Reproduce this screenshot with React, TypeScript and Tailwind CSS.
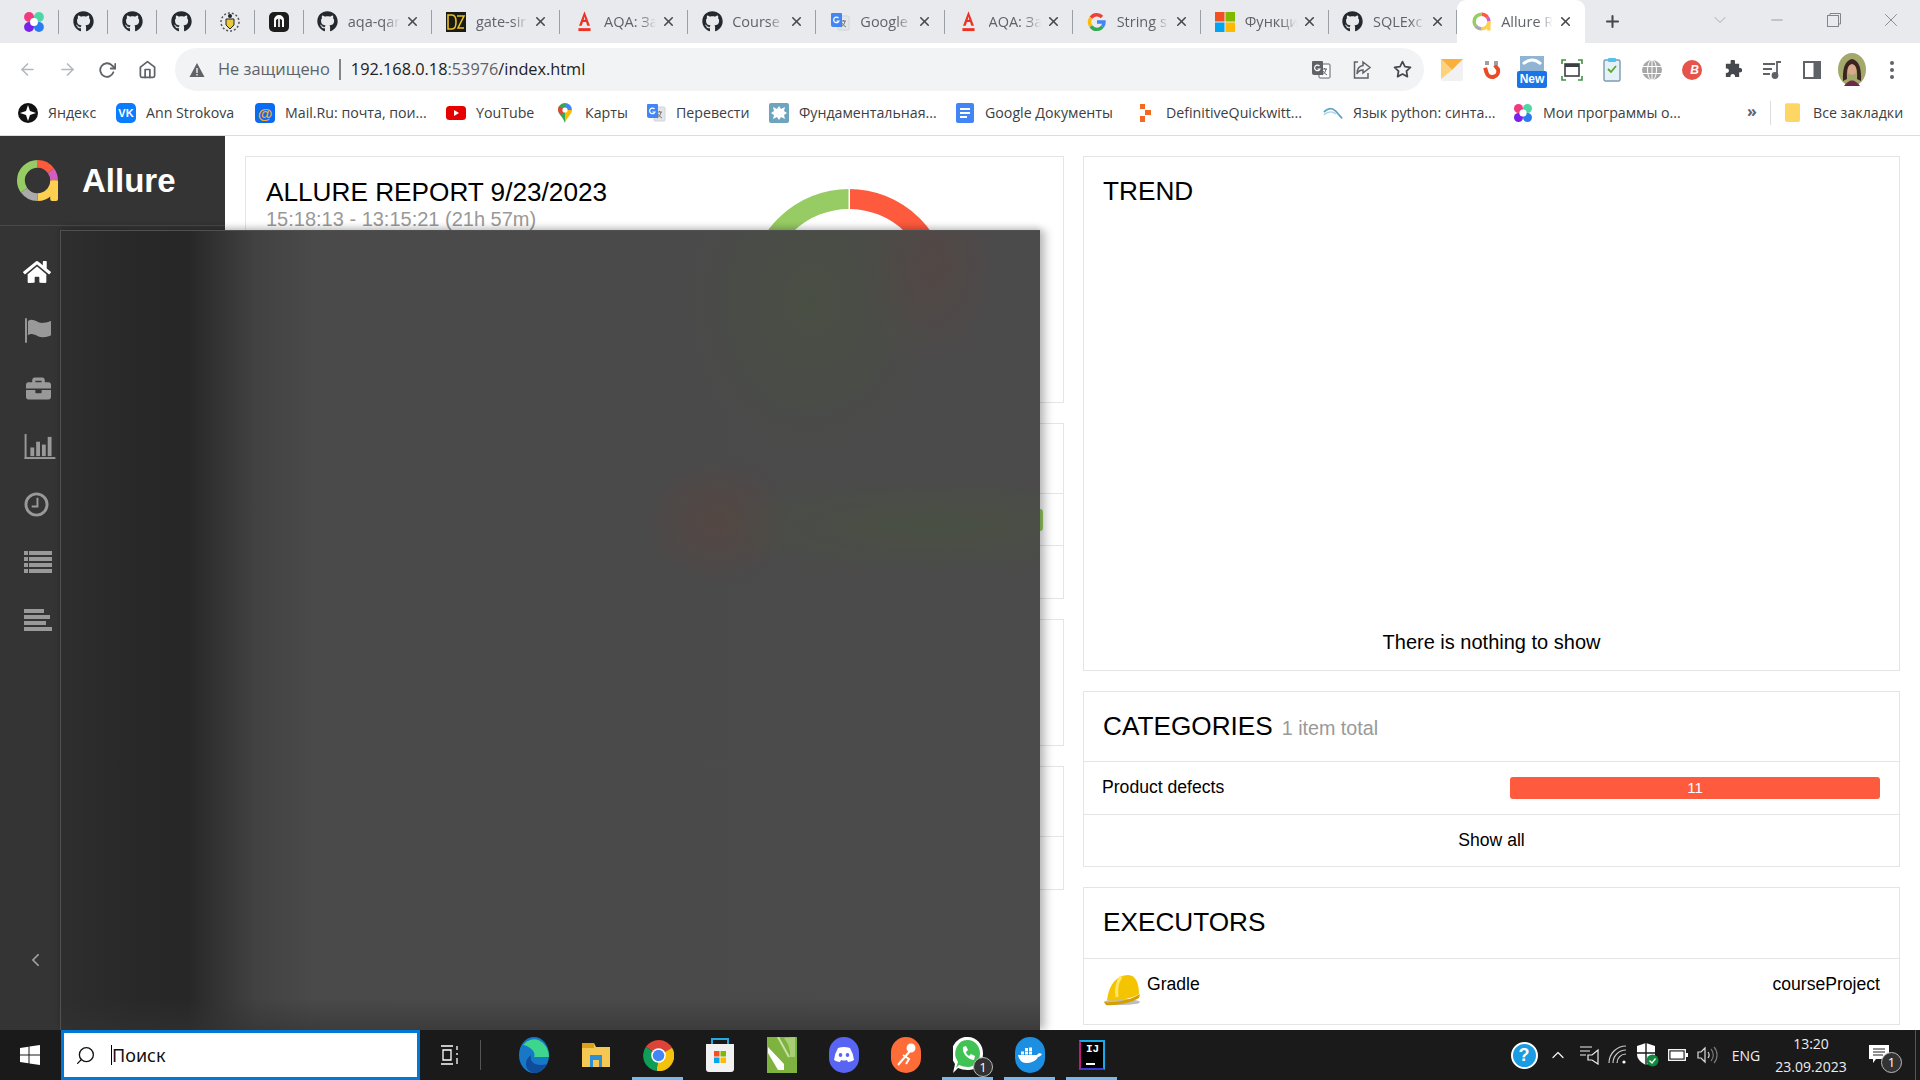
import React from 'react';
import { FaGithub, FaHome, FaBriefcase } from 'react-icons/fa';
import { FiArrowLeft, FiArrowRight, FiRotateCw, FiHome, FiStar, FiX, FiPlus, FiChevronDown, FiChevronLeft, FiChevronUp, FiMinus, FiSearch } from 'react-icons/fi';

const ui = "font-['Open_Sans','Noto_Sans',sans-serif]";

const Flower = () => (
  <svg viewBox="0 0 20 20" className="w-[22px] h-[22px]">
    <circle cx="5.5" cy="5.5" r="4.5" fill="#f0397f" />
    <circle cx="14.5" cy="5.5" r="4.5" fill="#4fd6a5" />
    <circle cx="5.5" cy="14.5" r="4.5" fill="#7a22e8" />
    <circle cx="14.5" cy="14.5" r="4.5" fill="#2a7cf0" />
    <circle cx="10" cy="10" r="3.6" fill="#fff" />
  </svg>
);

const AllureLogo = ({ className }: { className: string }) => (
  <svg viewBox="0 0 44 44" className={className}>
    <g fill="none" strokeWidth="8" transform="rotate(-90 22 22)">
      <circle cx="22" cy="22" r="17" pathLength={100} stroke="#fd5a3e" strokeDasharray="15 85" />
      <circle cx="22" cy="22" r="17" pathLength={100} stroke="#d35ebe" strokeDasharray="10 90" strokeDashoffset="-15" />
      <circle cx="22" cy="22" r="17" pathLength={100} stroke="#ffd050" strokeDasharray="25 75" strokeDashoffset="-25" />
      <circle cx="22" cy="22" r="17" pathLength={100} stroke="#aaaaaa" strokeDasharray="15 85" strokeDashoffset="-50" />
      <circle cx="22" cy="22" r="17" pathLength={100} stroke="#97cc64" strokeDasharray="35 65" strokeDashoffset="-65" />
    </g>
    <rect x="35" y="22" width="8" height="21" rx="2" fill="#ffd050" />
  </svg>
);

const AlfaIcon = () => (
  <svg viewBox="3 0 14 19" className="w-[17px] h-[23px]">
    <path d="M10 1 L14.5 13 H12.3 L11.3 10 H8.7 L7.7 13 H5.5 Z M9.3 8 H10.7 L10 5.6 Z" fill="#ef3124" fillRule="evenodd" />
    <rect x="5" y="15" width="10" height="2.4" fill="#ef3124" />
  </svg>
);

const TranslateIcon = ({ dark }: { dark?: boolean }) => (
  <svg viewBox="0 0 20 20" className="w-5 h-5">
    <rect x="8" y="4" width="11" height="14" rx="1" fill={dark ? '#fff' : '#e3e5e8'} stroke={dark ? '#5f6368' : '#d0d3d8'} strokeWidth="1" />
    <path d="M11 9 L16 9 M13.5 8 V9 M15 9 C14.5 12 13 14 11 15 M12 11 C13 13 14.5 14 16 15" stroke={dark ? '#5f6368' : '#70757a'} fill="none" strokeWidth="1" />
    <path d="M2 1 H11 A1 1 0 0 1 12 2 V15 H3 A2 2 0 0 1 1 13 V2 A1 1 0 0 1 2 1 Z" fill={dark ? '#5f6368' : '#4285f4'} />
    <path d="M8.5 6 A2.8 2.8 0 1 0 9 9 H6.5" stroke="#fff" strokeWidth="1.2" fill="none" />
  </svg>
);

const GoogleIcon = () => (
  <svg viewBox="0 0 20 20" className="w-5 h-5">
    <g fill="none" strokeWidth="3.4">
      <path d="M15 5 A7 7 0 0 0 4 5.8" stroke="#ea4335" />
      <path d="M4 5.8 A7 7 0 0 0 4 14.2" stroke="#fbbc05" />
      <path d="M4 14.2 A7 7 0 0 0 15.5 14.5" stroke="#34a853" />
      <path d="M15.5 14.5 A7 7 0 0 0 17 10 H10" stroke="#4285f4" />
    </g>
  </svg>
);

const MsIcon = () => (
  <svg viewBox="0 0 20 20" className="w-5 h-5">
    <rect x="0" y="0" width="9.5" height="9.5" fill="#f25022" />
    <rect x="10.5" y="0" width="9.5" height="9.5" fill="#7fba00" />
    <rect x="0" y="10.5" width="9.5" height="9.5" fill="#00a4ef" />
    <rect x="10.5" y="10.5" width="9.5" height="9.5" fill="#ffb900" />
  </svg>
);

const GitIcon = () => <FaGithub className="w-[21px] h-[21px] text-[#24292f]" />;

const SmallTab = ({ children }: { children: React.ReactNode }) => (
  <div className="w-[49px] h-full flex items-center justify-center border-r-0 relative">
    {children}
    <span className="absolute right-0 top-[10px] h-[24px] w-px bg-[#9aa0a6]" />
  </div>
);

const TextTab = ({ icon, title, active }: { icon: React.ReactNode; title: string; active?: boolean }) => (
  <div className={active ? 'w-[128.3px] h-[43px] flex items-center relative bg-white rounded-t-[9px]' : 'w-[128.3px] h-[43px] flex items-center relative'}>
    <div className="w-[22px] ml-[13px] flex justify-center">{icon}</div>
    <div className="w-[52px] ml-[9px] overflow-hidden whitespace-nowrap text-[14.5px] text-[#5f6368] [mask-image:linear-gradient(to_right,#000_70%,transparent)]">{title}</div>
    <FiX className="w-[15px] h-[15px] text-[#45494d] ml-[5px]" strokeWidth={2.5} />
    {!active && <span className="absolute right-0 top-[10px] h-[24px] w-px bg-[#9aa0a6]" />}
  </div>
);

const TabStrip = () => (
  <div className={`h-[43px] bg-[#e8eaed] flex pl-[10px] ${ui}`}>
    <SmallTab><Flower /></SmallTab>
    <SmallTab><GitIcon /></SmallTab>
    <SmallTab><GitIcon /></SmallTab>
    <SmallTab><GitIcon /></SmallTab>
    <SmallTab>
      <svg viewBox="0 0 20 20" className="w-5 h-5">
        <circle cx="10" cy="10" r="9" fill="none" stroke="#555" strokeWidth="1.5" strokeDasharray="2 2" />
        <path d="M6 7 H14 V13 L10 17 L6 13 Z" fill="#e7c93b" stroke="#222" />
        <circle cx="10" cy="4" r="2" fill="#222" />
      </svg>
    </SmallTab>
    <SmallTab>
      <svg viewBox="0 0 20 20" className="w-5 h-5">
        <rect width="20" height="20" rx="5" fill="#1d1d1d" />
        <path d="M5 15 V8 A5 5 0 0 1 15 8 V15 H13 V8 L10.8 6.5 V15 H9.2 V6.5 L7 8 V15 Z" fill="#fff" />
      </svg>
    </SmallTab>
    <TextTab icon={<GitIcon />} title="aqa-qar" />
    <TextTab
      icon={
        <svg viewBox="0 0 20 20" className="w-5 h-5">
          <rect width="20" height="20" fill="#1b1b12" />
          <path d="M2 3 H6 Q10 3 10 10 Q10 17 6 17 H2 Z M11 4 H18 L12 16 H18" fill="none" stroke="#e6c229" strokeWidth="1.6" />
        </svg>
      }
      title="gate-sir"
    />
    <TextTab icon={<AlfaIcon />} title="AQA: За" />
    <TextTab icon={<GitIcon />} title="Course" />
    <TextTab icon={<TranslateIcon />} title="Google" />
    <TextTab icon={<AlfaIcon />} title="AQA: За" />
    <TextTab icon={<GoogleIcon />} title="String s" />
    <TextTab icon={<MsIcon />} title="Функци" />
    <TextTab icon={<GitIcon />} title="SQLExc" />
    <TextTab icon={<AllureLogo className="w-[19px] h-[19px]" />} title="Allure R" active />
    <div className="w-[54px] flex items-center justify-center">
      <FiPlus className="w-[19px] h-[19px] text-[#45494d]" strokeWidth={2.6} />
    </div>
    <div className="ml-[56px] w-[50px] flex items-center justify-center -mt-[4px]">
      <FiChevronDown className="w-[20px] h-[20px] text-[#9aa0a6]" strokeWidth={1} />
    </div>
    <div className="ml-[3px] w-[57px] flex items-center justify-center -mt-[4px]">
      <FiMinus className="w-[18px] h-[18px] text-[#80868b]" strokeWidth={1} />
    </div>
    <div className="w-[57px] flex items-center justify-center -mt-[4px]">
      <svg viewBox="0 0 14 14" className="w-[14px] h-[14px]" fill="none" stroke="#80868b">
        <rect x="0.5" y="2.5" width="11" height="11" />
        <path d="M3 2.5 V0.5 H13.5 V11 H11.5" />
      </svg>
    </div>
    <div className="w-[58px] flex items-center justify-center -mt-[4px]">
      <FiX className="w-[22px] h-[22px] text-[#80868b]" strokeWidth={1} />
    </div>
  </div>
);

const Ext = ({ children }: { children: React.ReactNode }) => (
  <div className="w-10 h-[43px] flex items-center justify-center relative">{children}</div>
);

const Toolbar = () => (
  <div className={`h-[48px] bg-white pt-[5px] flex ${ui}`}>
    <div className="w-[7px]" />
    <div className="w-10 h-[43px] flex items-center justify-center"><FiArrowLeft className="w-[19px] h-[19px] text-[#b4b7bb]" strokeWidth={2} /></div>
    <div className="w-10 h-[43px] flex items-center justify-center"><FiArrowRight className="w-[19px] h-[19px] text-[#b4b7bb]" strokeWidth={2} /></div>
    <div className="w-10 h-[43px] flex items-center justify-center"><FiRotateCw className="w-[18px] h-[18px] text-[#5f6368]" strokeWidth={2.4} /></div>
    <div className="w-10 h-[43px] flex items-center justify-center"><FiHome className="w-[19px] h-[19px] text-[#5f6368]" strokeWidth={2.2} /></div>
    <div className="ml-[8px] w-[1249px] h-[43px] rounded-full bg-[#f1f3f4] flex items-center pl-[14px]">
      <svg viewBox="0 0 16 16" className="w-[16px] h-[16px]"><path d="M8 1 L15.5 15 H0.5 Z" fill="#5f6368" /><rect x="7.3" y="6" width="1.4" height="5" fill="#f1f3f4" /><rect x="7.3" y="12" width="1.4" height="1.5" fill="#f1f3f4" /></svg>
      <span className="ml-[13px] text-[16.4px] text-[#5f6368] whitespace-nowrap">Не защищено</span>
      <span className="ml-[9px] w-[2px] h-[21px] bg-[#80868b]" />
      <span className="ml-[10px] text-[16.3px] text-[#5f6368] whitespace-nowrap"><span className="text-[#202124]">192.168.0.18</span>:53976<span className="text-[#202124]">/index.html</span></span>
      <div className="ml-auto flex items-center">
        <div className="w-[41px] flex justify-center"><TranslateIcon dark /></div>
        <div className="w-[41px] flex justify-center">
          <svg viewBox="0 0 20 20" className="w-5 h-5" fill="none" stroke="#5f6368" strokeWidth="1.5"><path d="M6 2 H2.5 V18 H16 V13" /><path d="M11 2 L18 7.5 L11 13 V10 C8 10 6 11.5 5 14 C5 9 7.5 6 11 5.5 Z" /></svg>
        </div>
        <div className="w-[41px] flex justify-center mr-[1px]"><FiStar className="w-[19px] h-[19px] text-[#45494d]" strokeWidth={2.2} /></div>
      </div>
    </div>
    <div className="ml-[8px] flex">
      <Ext>
        <svg viewBox="0 0 22 22" className="w-[22px] h-[22px]">
          <rect width="22" height="22" rx="2" fill="#f1f1f1" />
          <path d="M0 0 H22 L11 11 Z" fill="#fbb03b" />
          <path d="M0 0 V20 L11 11 Z" fill="#fdd27a" />
        </svg>
      </Ext>
      <Ext>
        <svg viewBox="0 0 20 20" className="w-5 h-5" fill="none">
          <path d="M4 6 V11 A6 6 0 0 0 16 11 L14 6" stroke="#ea4a25" strokeWidth="4" transform="rotate(-15 10 10)" />
          <rect x="3" y="1" width="4" height="4" fill="#9aa0a6" />
          <rect x="12" y="1" width="4" height="4" fill="#9aa0a6" />
        </svg>
      </Ext>
      <Ext>
        <svg viewBox="0 0 24 16" className="absolute top-[8px] left-[8px] w-[24px] h-[16px]">
          <rect width="24" height="16" fill="#8fb4d4" />
          <path d="M3 8 Q12 0 21 8" fill="none" stroke="#fff" strokeWidth="3" />
        </svg>
        <span className="absolute top-[23px] left-[5px] w-[30px] h-[17px] rounded-[2px] bg-[#1a73e8] text-white text-[12px] leading-[17px] font-bold text-center font-['Liberation_Sans',sans-serif]">New</span>
      </Ext>
      <Ext>
        <svg viewBox="0 0 22 22" className="w-[22px] h-[22px]" fill="none">
          <path d="M1 5 V1 H5 M17 1 H21 V5 M21 17 V21 H17 M5 21 H1 V17" stroke="#3f9142" strokeWidth="1.6" />
          <rect x="4" y="5" width="14" height="12" stroke="#3c4043" strokeWidth="1.6" />
          <rect x="4" y="5" width="14" height="3" fill="#3c4043" />
        </svg>
      </Ext>
      <Ext>
        <svg viewBox="0 0 18 24" className="w-[18px] h-[24px]">
          <rect x="1" y="2" width="16" height="21" rx="1.5" fill="#e5f1f8" stroke="#7d9bb0" strokeWidth="1.4" />
          <rect x="5" y="0" width="8" height="4" rx="1" fill="#55c1e8" />
          <path d="M5 11 L8 14 L13 8" fill="none" stroke="#5aa62e" strokeWidth="1.8" />
        </svg>
      </Ext>
      <Ext>
        <svg viewBox="0 0 20 20" className="w-5 h-5" fill="none" stroke="#fff" strokeWidth="1">
          <circle cx="10" cy="10" r="10" fill="#a8a8a8" stroke="none" />
          <ellipse cx="10" cy="10" rx="4.5" ry="10" />
          <path d="M0 6.5 H20 M0 13.5 H20 M10 0 V20" />
        </svg>
      </Ext>
      <Ext>
        <div className="w-5 h-5 rounded-full bg-[#e5534b] flex items-center justify-end pr-[3px] text-white text-[12px] font-bold italic leading-none font-['Liberation_Sans',sans-serif]">B</div>
      </Ext>
      <Ext>
        <svg viewBox="0 0 20 20" className="w-[19px] h-[19px]"><path d="M8 1 A2.4 2.4 0 0 1 12.6 1 V4 H17 V8.5 A2.4 2.4 0 1 1 17 13 V18 H12.5 A2.4 2.4 0 1 0 8 18 H3 V13.5 A2.4 2.4 0 1 0 3 9 V4 H8 Z" fill="#45494d" /></svg>
      </Ext>
      <Ext>
        <svg viewBox="0 0 20 20" className="w-5 h-5" fill="none" stroke="#5f6368" strokeWidth="1.8"><path d="M1 4 H13 M1 9 H10 M1 14 H8" /><path d="M15 15 V2 H19" /><circle cx="13" cy="15.5" r="2.5" fill="#5f6368" /></svg>
      </Ext>
      <Ext>
        <svg viewBox="0 0 18 18" className="w-[18px] h-[18px]"><rect width="18" height="18" fill="#5f6368" /><rect x="2" y="2" width="8.5" height="14" fill="#fff" /></svg>
      </Ext>
      <Ext>
        <svg viewBox="0 0 28 33" className="w-[28px] h-[33px]">
          <ellipse cx="14" cy="16.5" rx="14" ry="16.5" fill="#a3a86b" />
          <path d="M6 33 Q14 22 22 33 Z" fill="#6b2a4a" />
          <ellipse cx="14" cy="16" rx="5" ry="6" fill="#d9a98e" />
          <path d="M5 28 Q4 8 14 6 Q24 8 23 28 L19 26 Q20 12 14 11 Q8 12 9 26 Z" fill="#3a2420" />
        </svg>
      </Ext>
      <Ext>
        <svg viewBox="0 0 4 18" className="w-1 h-[18px]" fill="#5f6368"><circle cx="2" cy="2" r="2" /><circle cx="2" cy="9" r="2" /><circle cx="2" cy="16" r="2" /></svg>
      </Ext>
    </div>
  </div>
);

const Bookmark = ({ width, icon, label }: { width: string; icon: React.ReactNode; label: string }) => (
  <div className={`${width} flex items-center h-full`}>
    <div className="w-5 h-5 flex items-center justify-center">{icon}</div>
    <span className="ml-[10px] text-[14.2px] text-[#3c4043] whitespace-nowrap">{label}</span>
  </div>
);

const BookmarksBar = () => (
  <div className={`h-[45px] bg-white border-b border-[#dadce0] flex items-center pl-[18px] ${ui}`}>
    <Bookmark width="w-[98px]" label="Яндекс" icon={<svg viewBox="0 0 20 20" className="w-5 h-5"><circle cx="10" cy="10" r="10" fill="#111" /><path d="M10 2 L12 8 L18 10 L12 12 L10 18 L8 12 L2 10 L8 8 Z" fill="#fff" /></svg>} />
    <Bookmark width="w-[139px]" label="Ann Strokova" icon={<div className="w-5 h-5 rounded-[5px] bg-[#0a7cff] text-white text-[11px] font-bold flex items-center justify-center font-['Liberation_Sans',sans-serif]">VK</div>} />
    <Bookmark width="w-[191px]" label="Mail.Ru: почта, пои..." icon={<div className="w-5 h-5 rounded-[4px] bg-[#0a6cf5] text-[#ffa930] text-[15px] font-bold leading-none flex items-center justify-center font-['Liberation_Sans',sans-serif]">@</div>} />
    <Bookmark width="w-[109px]" label="YouTube" icon={<svg viewBox="0 0 20 14" className="w-5 h-[14px]"><rect width="20" height="14" rx="3.5" fill="#e60000" /><path d="M8 4 L13 7 L8 10 Z" fill="#fff" /></svg>} />
    <Bookmark width="w-[91px]" label="Карты" icon={<svg viewBox="0 0 14 20" className="w-[14px] h-5"><path d="M7 20 C5 14 0 11 0 7 A7 7 0 0 1 7 0 Z" fill="#34a853" /><path d="M7 20 C9 14 14 11 14 7 L7 7 Z" fill="#fbbc05" /><path d="M7 0 A7 7 0 0 1 14 7 L7 7 Z" fill="#4285f4" /><path d="M1 3 L7 7 L3 12 Q0 9 0 7 Q0 5 1 3 Z" fill="#ea4335" /><circle cx="7" cy="7" r="2.6" fill="#fff" /></svg>} />
    <Bookmark width="w-[123px]" label="Перевести" icon={<TranslateIcon />} />
    <Bookmark width="w-[186px]" label="Фундаментальная..." icon={<svg viewBox="0 0 20 20" className="w-5 h-5"><rect width="20" height="20" rx="2" fill="#6da5bf" /><path d="M10 3 L12 6 L16 4 L15 8 L18 10 L15 12 L16 16 L12 14 L10 17 L8 14 L4 16 L5 12 L2 10 L5 8 L4 4 L8 6 Z" fill="#fff" /></svg>} />
    <Bookmark width="w-[181px]" label="Google Документы" icon={<svg viewBox="0 0 18 20" className="w-[18px] h-5"><rect width="18" height="20" rx="2" fill="#4285f4" /><path d="M4 6 H14 M4 10 H14 M4 14 H11" stroke="#fff" strokeWidth="1.8" /></svg>} />
    <Bookmark width="w-[187px]" label="DefinitiveQuickwitt..." icon={<svg viewBox="0 0 14 18" className="w-[14px] h-[18px]" fill="#f26a21"><rect x="1" y="0" width="5" height="5" /><rect x="6" y="6" width="6" height="5" /><rect x="1" y="12" width="5" height="6" /></svg>} />
    <Bookmark width="w-[190px]" label="Язык python: синта..." icon={<svg viewBox="0 0 22 14" className="w-[22px] h-[14px]" fill="none"><path d="M1 6 Q8 -1 14 5 L21 13" stroke="#5fa8c8" strokeWidth="2" /><path d="M1 9 Q8 3 14 8" stroke="#a9cfe0" strokeWidth="1.5" /></svg>} />
    <Bookmark width="w-[230px]" label="Мои программы о..." icon={<Flower />} />
    <span className="w-[18px] text-[16px] text-[#5f6368] font-bold text-center leading-none -mt-[4px]">»</span>
    <span className="ml-[9px] w-px h-[24px] bg-[#dadce0]" />
    <div className="ml-[14px] flex items-center">
      <svg viewBox="0 0 16 20" className="w-[15px] h-[19px]"><path d="M2 0 H14 A2 2 0 0 1 16 2 V18 A2 2 0 0 1 14 20 H2 A2 2 0 0 1 0 18 V2 A2 2 0 0 1 2 0 Z" fill="#fdd663" /></svg>
      <span className="ml-[13px] text-[14.2px] text-[#3c4043] whitespace-nowrap">Все закладки</span>
    </div>
  </div>
);

const NavIcon = ({ children }: { children: React.ReactNode }) => (
  <div className="h-[58px] pl-[24px] flex items-center text-[#999999]">{children}</div>
);

const Sidebar = () => (
  <aside className="w-[225px] h-full bg-[#343434] flex flex-col relative font-['Liberation_Sans',sans-serif]">
    <div className="h-[90px] border-b border-[#494949] flex items-center pl-[16px]">
      <AllureLogo className="w-[43px] h-[43px]" />
      <span className="ml-[23px] text-[33px] font-bold text-white leading-none">Allure</span>
    </div>
    <div className="pt-[17px]">
      <NavIcon><FaHome className="w-[28px] h-[26px] text-white -ml-[1px]" /></NavIcon>
      <NavIcon>
        <svg viewBox="0 0 30 26" className="w-[29px] h-[25px]" fill="#999999">
          <rect x="1" y="0" width="2" height="26" rx="1" />
          <path d="M4 3 C10 -1 14 6 20 5 C24 5 27 3 28 3 V18 C26 19 24 20 20 20 C14 21 10 14 4 18 Z" />
        </svg>
      </NavIcon>
      <NavIcon><FaBriefcase className="w-[29px] h-[25px]" /></NavIcon>
      <NavIcon>
        <svg viewBox="0 0 32 26" className="w-[32px] h-[25px]" fill="#999999">
          <rect x="0" y="0" width="2" height="26" />
          <rect x="0" y="24" width="32" height="2" />
          <rect x="6" y="14" width="4" height="9" />
          <rect x="12" y="8" width="4" height="15" />
          <rect x="18" y="11" width="4" height="12" />
          <rect x="24" y="3" width="4" height="20" />
        </svg>
      </NavIcon>
      <NavIcon>
        <svg viewBox="0 0 26 26" className="w-[25px] h-[25px]" fill="none" stroke="#999999" strokeWidth="3">
          <circle cx="13" cy="13" r="11" />
          <path d="M14 6 V15 H8" strokeWidth="2" />
        </svg>
      </NavIcon>
      <NavIcon>
        <svg viewBox="0 0 28 22" className="w-[28px] h-[22px]" fill="#999999">
          <rect x="0" y="0" width="4" height="4" /><rect x="5" y="0" width="23" height="4" />
          <rect x="0" y="6" width="4" height="4" /><rect x="5" y="6" width="23" height="4" />
          <rect x="0" y="12" width="4" height="4" /><rect x="5" y="12" width="23" height="4" />
          <rect x="0" y="18" width="4" height="4" /><rect x="5" y="18" width="23" height="4" />
        </svg>
      </NavIcon>
      <NavIcon>
        <svg viewBox="0 0 28 22" className="w-[28px] h-[22px]" fill="#999999">
          <rect x="0" y="0" width="20" height="4" />
          <rect x="0" y="6" width="26" height="4" />
          <rect x="0" y="12" width="22" height="4" />
          <rect x="0" y="18" width="28" height="4" />
        </svg>
      </NavIcon>
    </div>
    <FiChevronLeft className="absolute left-[25px] top-[812px] w-[21px] h-[24px] text-[#a5a5a5]" strokeWidth={2} />
  </aside>
);

const Card = ({ className, children }: { className: string; children?: React.ReactNode }) => (
  <section className={`border border-[#e5e5e5] bg-white ${className}`}>{children}</section>
);

const Main = () => (
  <main className="flex-1 pt-[20px] pl-[20px] font-['Liberation_Sans',sans-serif] text-black grid grid-cols-[819px_817px] gap-x-[19px] items-start">
    <div className="flex flex-col gap-5">
      <Card className="h-[247px] flex">
        <div className="w-[503px] pl-[20px] pt-[18px]">
          <h2 className="text-[26.2px] leading-[34px] whitespace-nowrap">ALLURE REPORT 9/23/2023</h2>
          <div className="text-[20px] leading-[22px] text-[#999999] whitespace-nowrap -mt-[1px]">15:18:13 - 13:15:21 (21h 57m)</div>
        </div>
        <svg viewBox="0 0 200 200" className="w-[200px] h-[200px] mt-[32px]" fill="none" strokeWidth="20">
          <g transform="rotate(-90 100 100)">
            <circle cx="100" cy="100" r="90" pathLength={100} stroke="#fd5a3e" strokeDasharray="50 50" />
            <circle cx="100" cy="100" r="90" pathLength={100} stroke="#97cc64" strokeDasharray="50 50" strokeDashoffset="-50" />
          </g>
          <rect x="99.5" y="0" width="1.5" height="21" fill="#fff" stroke="none" />
        </svg>
      </Card>
      <Card className="h-[176px] flex flex-col">
        <div className="h-[70px] border-b border-[#e5e5e5]" />
        <div className="h-[52px] border-b border-[#e5e5e5] pt-[15px] flex justify-end pr-[20px]">
          <div className="w-[370px] h-[22px] rounded-[3px] bg-[#97cc64]" />
        </div>
      </Card>
      <Card className="h-[127px]" />
      <Card className="h-[124px] flex flex-col">
        <div className="h-[70px] border-b border-[#e5e5e5]" />
      </Card>
    </div>
    <div className="flex flex-col gap-5">
      <Card className="h-[515px] flex flex-col">
        <div className="h-[70px] pl-[19px] flex items-center text-[26.2px]">TREND</div>
        <div className="mt-auto pb-[11px] text-center text-[20px] leading-[34px]">There is nothing to show</div>
      </Card>
      <Card className="h-[176px] flex flex-col">
        <div className="h-[70px] border-b border-[#e5e5e5] pl-[19px] flex items-center whitespace-nowrap">
          <span className="text-[26.2px]">CATEGORIES</span>
          <span className="ml-[9px] text-[19.7px] text-[#999999] mt-[4px]">1 item total</span>
        </div>
        <div className="h-[53px] border-b border-[#e5e5e5] pl-[18px] pr-[19px] flex items-center justify-between">
          <span className="text-[17.6px] -mt-[2px]">Product defects</span>
          <div className="w-[370px] h-[22px] rounded-[3px] bg-[#fd5a3e] text-white text-[15px] leading-[22px] text-center">11</div>
        </div>
        <div className="flex-1 flex items-center justify-center text-[17.6px]">Show all</div>
      </Card>
      <Card className="h-[138px] flex flex-col">
        <div className="h-[71px] border-b border-[#e5e5e5] pl-[19px] flex items-center text-[26.2px]">EXECUTORS</div>
        <div className="flex-1 pl-[19px] pr-[19px] pt-[13px] flex items-start text-[17.6px]">
          <svg viewBox="0 0 38 32" className="w-[38px] h-[32px] mt-[2px]">
            <ellipse cx="19" cy="28" rx="18" ry="3" fill="#bdbdbd" />
            <path d="M4 26 C6 10 14 1 25 1 C33 1 36 10 36 20 C30 24 14 28 4 26 Z" fill="#f5c400" />
            <path d="M1 28 C12 29 28 26 37 20 L36 24 C28 29 12 32 3 31 Z" fill="#d59f00" />
            <path d="M18 3 C14 8 13 15 14 23" fill="none" stroke="#ffe66a" strokeWidth="3" />
          </svg>
          <span className="ml-[6px] -mt-[1px]">Gradle</span>
          <span className="ml-auto -mt-[1px]">courseProject</span>
        </div>
      </Card>
    </div>
  </main>
);

// the blurred window lying over the report
const BlurredWindow = () => (
  <div className="absolute left-[60px] top-[94px] w-[980px] h-[800px] border-t border-l border-[#505050] shadow-[6px_0_8px_rgba(0,0,0,0.22),0_-3px_6px_rgba(0,0,0,0.12)] bg-[linear-gradient(to_top,rgba(50,50,50,0.6),transparent_4%),radial-gradient(ellipse_75px_65px_at_656px_290px,rgba(110,60,50,0.28),transparent),radial-gradient(ellipse_70px_110px_at_870px_30px,rgba(110,60,50,0.22),transparent),radial-gradient(ellipse_120px_150px_at_750px_70px,rgba(70,85,50,0.32),transparent),radial-gradient(ellipse_240px_50px_at_870px_295px,rgba(70,90,50,0.32),transparent),linear-gradient(to_right,#2e2e2e_0%,#282828_8%,#272727_13%,#333333_16%,#424242_20%,#4a4a4a_26%,#4b4b4b_100%)]" />
);

const AppCell = ({ children, active }: { children: React.ReactNode; active?: boolean }) => (
  <div className="w-[62px] h-full relative flex items-center justify-center">
    {children}
    {active && <span className="absolute bottom-0 left-[5px] right-[6px] h-[3px] bg-[#76b9ed]" />}
  </div>
);

const Badge = () => (
  <span className="absolute right-[6px] bottom-[3px] w-[20px] h-[20px] rounded-full bg-[#333] border border-[#bbb] text-white text-[13px] leading-[18px] text-center">1</span>
);

const Taskbar = () => (
  <footer className={`h-[50px] bg-[#1a1a1a] flex items-stretch text-white ${ui}`}>
    <div className="w-[61px] flex items-center justify-center pr-[2px]">
      <svg viewBox="0 0 20 20" className="w-[20px] h-[20px]" fill="#fff">
        <path d="M0 3 L8.5 1.8 V9.5 H0 Z M9.5 1.6 L20 0 V9.5 H9.5 Z M0 10.5 H8.5 V18.2 L0 17 Z M9.5 10.5 H20 V20 L9.5 18.4 Z" />
      </svg>
    </div>
    <div className="w-[359px] h-full bg-white border-[3px] border-[#0078d7] flex items-center pl-[11px] text-[#111] font-['Noto_Sans',sans-serif]">
      <FiSearch className="w-[21px] h-[21px] -scale-x-100" strokeWidth={1.5} />
      <span className="ml-[15px] w-px h-[20px] bg-black" />
      <span className="text-[18px]">Поиск</span>
    </div>
    <div className="w-[60px] flex items-center justify-center">
      <svg viewBox="0 0 20 20" className="w-5 h-5" fill="none" stroke="#fff" strokeWidth="1.3">
        <path d="M1 1 H13 M1 19 H13 M3 5 H11 V15 H3 Z M17 1 V5 M17 8 V10 M17 13 V19" />
      </svg>
    </div>
    <div className="w-[23px] flex items-center"><span className="w-px h-[30px] bg-[#555]" /></div>
    <div className="flex">
      <AppCell>
        <svg viewBox="0 0 30 36" className="w-[30px] h-[36px]">
          <ellipse cx="15" cy="18" rx="15" ry="18" fill="#1878c8" />
          <path d="M4 8 A15 18 0 0 1 30 20 L15 20 C18 14 8 8 4 8 Z" fill="#3dd68c" />
          <path d="M15 36 C6 34 4 24 12 18 C10 26 18 30 28 27 C25 32 21 36 15 36 Z" fill="#0f4c9c" />
        </svg>
      </AppCell>
      <AppCell>
        <svg viewBox="0 0 28 28" className="w-[28px] h-[28px]">
          <path d="M0 2 H12 L14 6 H28 V26 H0 Z" fill="#f5c853" />
          <rect x="0" y="2" width="12" height="5" fill="#d9a21b" />
          <rect x="8" y="14" width="12" height="12" fill="#2c8fd8" />
          <rect x="11" y="19" width="6" height="7" fill="#f5c853" />
        </svg>
      </AppCell>
      <AppCell active>
        <svg viewBox="0 0 32 32" className="w-[31px] h-[31px]">
          <path d="M16 16 L3 7 A16 16 0 0 1 30 8 Z" fill="#db4437" />
          <path d="M16 16 L30 8 A16 16 0 0 1 14 32 Z" fill="#f4c20d" />
          <path d="M16 16 L14 32 A16 16 0 0 1 3 7 Z" fill="#0f9d58" />
          <circle cx="16" cy="16" r="7.5" fill="#fff" />
          <circle cx="16" cy="16" r="6" fill="#4285f4" />
        </svg>
      </AppCell>
      <AppCell>
        <svg viewBox="0 0 30 36" className="w-[30px] h-[36px]">
          <path d="M7 8 V2 H23 V8" fill="none" stroke="#27a9e0" strokeWidth="2" />
          <path d="M1 7 H29 V32 Q29 35 26 35 H4 Q1 35 1 32 Z" fill="#f2f2f2" />
          <rect x="9" y="14" width="5.5" height="5.5" fill="#f25022" />
          <rect x="15.5" y="14" width="5.5" height="5.5" fill="#7fba00" />
          <rect x="9" y="20.5" width="5.5" height="5.5" fill="#00a4ef" />
          <rect x="15.5" y="20.5" width="5.5" height="5.5" fill="#ffb900" />
        </svg>
      </AppCell>
      <AppCell>
        <svg viewBox="0 0 30 36" className="w-[30px] h-[36px]">
          <rect width="30" height="36" fill="#7fb33f" />
          <path d="M17 1 Q24 10 23 20 H28 V0 Z" fill="#a8cf75" />
          <path d="M1 10 L17 27 L17 33 L11 33 L1 16 Z" fill="#fff" />
          <path d="M11 0 L22 20" stroke="#c9e0a8" strokeWidth="2" />
        </svg>
      </AppCell>
      <AppCell>
        <div className="w-[30px] h-[36px] rounded-full bg-[#5865f2] flex items-center justify-center">
          <svg viewBox="0 0 20 16" className="w-[20px] h-[16px]">
            <path d="M4 1 Q10 -1 16 1 Q19 6 20 13 Q17 15 14 15 L13 13 Q10 14 7 13 L6 15 Q3 15 0 13 Q1 6 4 1 Z" fill="#fff" />
            <ellipse cx="6.5" cy="8" rx="1.8" ry="2.1" fill="#5865f2" />
            <ellipse cx="13.5" cy="8" rx="1.8" ry="2.1" fill="#5865f2" />
          </svg>
        </div>
      </AppCell>
      <AppCell>
        <div className="w-[30px] h-[36px] rounded-full bg-[#ff6c37] flex items-center justify-center">
          <svg viewBox="0 0 20 24" className="w-[20px] h-[24px]" fill="none" stroke="#fff" strokeWidth="2"><path d="M2 22 L14 8" /><circle cx="15" cy="5" r="3.5" fill="#fff" /><path d="M7 12 L13 16 L10 21" /></svg>
        </div>
      </AppCell>
      <AppCell active>
        <svg viewBox="0 0 30 36" className="w-[30px] h-[36px]">
          <path d="M15 0 A15 16.5 0 0 1 15 33 Q9 33 5 31 L0 36 L2 27 A15 16.5 0 0 1 15 0 Z" fill="#fff" />
          <path d="M15 3 A12 13.5 0 0 1 15 30 Q10 30 6 28 L3 31 L5 25 A12 13.5 0 0 1 15 3 Z" fill="#41c254" />
          <path d="M10 10 C9 16 14 22 21 23 L22 19 L18 17 L16 19 C14 18 13 16 13 15 L15 13 L13 9 Z" fill="#fff" />
        </svg>
        <Badge />
      </AppCell>
      <AppCell active>
        <div className="w-[30px] h-[36px] rounded-full bg-[#1c8fe3] flex items-center justify-center">
          <svg viewBox="0 0 24 16" className="w-[24px] h-[16px]" fill="#fff">
            <path d="M0 8 H19 C20 6 22 6 24 7 C23 9 21 10 20 10 C18 14 13 16 8 16 C3 16 1 12 0 8 Z" />
            <rect x="3" y="4.5" width="3" height="3" /><rect x="7" y="4.5" width="3" height="3" /><rect x="11" y="4.5" width="3" height="3" /><rect x="7" y="1" width="3" height="3" /><rect x="11" y="1" width="3" height="3" /><rect x="11" y="-2.5" width="3" height="3" />
          </svg>
        </div>
      </AppCell>
      <AppCell active>
        <div className="w-[26px] h-[30px] bg-black border-t-2 border-r-2 border-[#19a8e8] border-l-2 border-l-[#c2187a] border-b-2 border-b-[#3b3bd8] flex flex-col pl-[5px] pt-[2px] text-white font-['Liberation_Mono',monospace] font-bold text-[11px] leading-none">
          IJ
          <span className="w-[9px] h-[2px] bg-white mt-[8px]" />
        </div>
      </AppCell>
    </div>
    <div className="ml-auto flex h-full text-[#eeeeee]">
      <div className="w-[30px] flex items-center justify-center">
        <div className="w-[27px] h-[27px] rounded-full bg-[#1a9be2] border-2 border-white text-white font-bold text-[18px] leading-none flex items-center justify-center font-['Liberation_Sans',sans-serif]">?</div>
      </div>
      <div className="w-[38px] flex items-center justify-center"><FiChevronUp className="w-[20px] h-[20px]" strokeWidth={1.5} /></div>
      <div className="w-[24px] flex items-center justify-center">
        <svg viewBox="0 0 20 20" className="w-5 h-5" fill="none" stroke="#eee" strokeWidth="1.2"><path d="M1 2 H13 M1 6 H11 M1 10 H7 M9 10 H13 L19 5 V19 L13 15 H9 Z" /></svg>
      </div>
      <div className="w-[34px] flex items-center justify-center">
        <svg viewBox="0 0 20 20" className="w-5 h-5" fill="none" stroke="#ccc" strokeWidth="1.2"><path d="M1 18 A17 17 0 0 1 18 1 M5 18 A13 13 0 0 1 18 5 M9 18 A9 9 0 0 1 18 9" /><circle cx="16" cy="17" r="1.6" fill="#fff" stroke="none" /></svg>
      </div>
      <div className="w-[26px] flex items-center justify-center">
        <svg viewBox="0 0 22 24" className="w-[22px] h-[24px]">
          <path d="M9 0 L18 3 V11 C18 17 13 20 9 22 C5 20 0 17 0 11 V3 Z" fill="#fff" />
          <path d="M9 0 V22 M0 10 H18" stroke="#1a1a1a" strokeWidth="1.4" />
          <circle cx="15.5" cy="17.5" r="6" fill="#0f893e" />
          <path d="M12.5 17.5 L15 20 L18.5 15.5" stroke="#fff" strokeWidth="1.4" fill="none" />
        </svg>
      </div>
      <div className="w-[34px] flex items-center justify-center">
        <svg viewBox="0 0 20 12" className="w-5 h-3"><rect x="0.7" y="0.7" width="16.6" height="10.6" fill="none" stroke="#fff" strokeWidth="1.3" /><rect x="2.5" y="2.5" width="13" height="7" fill="#fff" /><rect x="18" y="4" width="2" height="4" fill="#fff" /></svg>
      </div>
      <div className="w-[26px] flex items-center justify-center">
        <svg viewBox="0 0 22 20" className="w-[22px] h-5" fill="none" stroke="#ddd" strokeWidth="1.2"><path d="M1 7 H4 L8 3 V17 L4 13 H1 Z" /><path d="M11 7 A5 5 0 0 1 11 13" /><path d="M14 4 A9 9 0 0 1 14 16" stroke="#777" /><path d="M17 2 A12 12 0 0 1 17 18" stroke="#777" /></svg>
      </div>
      <div className="w-[50px] flex items-center justify-center text-[14px]">ENG</div>
      <div className="w-[80px] flex flex-col items-center justify-center text-[14px] leading-[23px]">
        <span>13:20</span>
        <span>23.09.2023</span>
      </div>
      <div className="w-[56px] relative flex items-center justify-center">
        <svg viewBox="0 0 20 18" className="w-5 h-[18px] -mt-[2px]"><path d="M0 0 H20 V14 H7 L4 18 V14 H0 Z" fill="#fff" /><path d="M4 4 H16 M4 7 H16 M4 10 H14" stroke="#222" /></svg>
        <span className="absolute left-[30px] top-[22px] w-[21px] h-[21px] rounded-full bg-[#333] border border-[#bbb] text-white text-[13px] leading-[19px] text-center">1</span>
      </div>
      <div className="w-[13px] pl-[8px] flex items-center"><span className="w-px h-full bg-[#555]" /></div>
    </div>
  </footer>
);

export default function App() {
  return (
    <div className="w-[1920px] h-[1080px] overflow-hidden bg-white flex flex-col">
      <TabStrip />
      <Toolbar />
      <BookmarksBar />
      <div className="h-[894px] flex relative overflow-hidden">
        <Sidebar />
        <Main />
        <BlurredWindow />
      </div>
      <Taskbar />
    </div>
  );
}
